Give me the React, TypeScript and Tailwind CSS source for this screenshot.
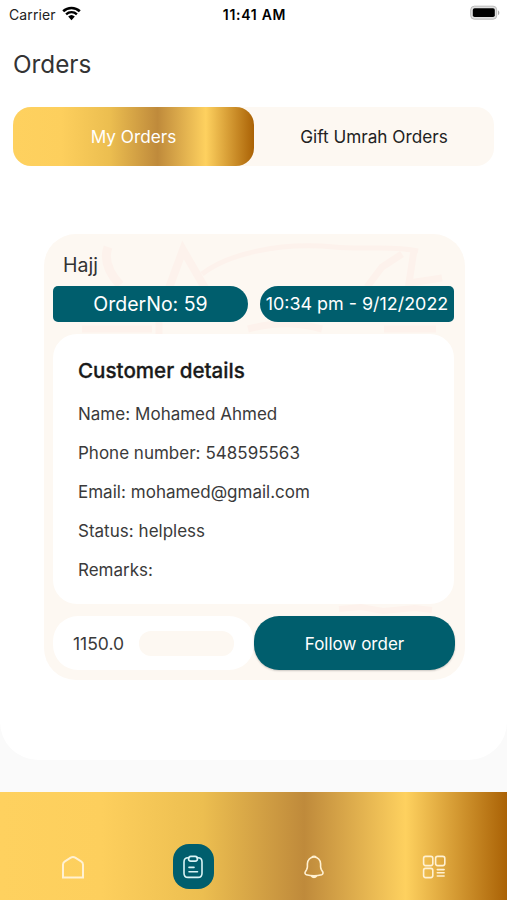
import type { ReactNode } from "react"
import clsx from "clsx"

const gold =
  "bg-[linear-gradient(90deg,#fed15f_0%,#fdcf5d_20%,#ecbe50_40%,#bf8a3b_60%,#fed15f_80%,#aa6206_100%)]"

const details = [
  { label: "Name", value: "Mohamed Ahmed" },
  { label: "Phone number", value: "548595563" },
  { label: "Email", value: "mohamed@gmail.com" },
  { label: "Status", value: "helpless" },
  { label: "Remarks", value: "" },
]

function StatusBar() {
  return (
    <div className="grid h-7 grid-cols-3 items-center pr-[7px] pl-[9px] text-black">
      <div className="flex items-center gap-[6px]">
        <span className="text-[14px] tracking-[0.1px] text-[#222]">Carrier</span>
        <svg className="-mt-0.5" width="19" height="15" viewBox="0 0 19 15" fill="none">
          <path d="M1.2 5.3a12 12 0 0 1 16.6 0" stroke="currentColor" strokeWidth="2.6" />
          <path d="M4.1 8.3a7.9 7.9 0 0 1 10.8 0" stroke="currentColor" strokeWidth="2.4" />
          <path d="M6.2 10.6a4.9 4.9 0 0 1 6.6 0L9.5 14.2z" fill="currentColor" />
        </svg>
      </div>
      <span className="text-center text-[14px] font-semibold tracking-[0.7px] whitespace-nowrap">
        11:41 AM
      </span>
      <svg className="-mt-0.5 justify-self-end" width="30" height="16" viewBox="0 0 30 16">
        <rect x="0.7" y="1.2" width="26" height="13" rx="3.6" fill="#e0e0e0" stroke="#bbb" />
        <rect x="2.8" y="3.3" width="22" height="8.8" rx="1.8" fill="#000" />
        <path d="M28 5.4c1.8.6 1.8 4 0 4.6z" fill="#aaa" />
      </svg>
    </div>
  )
}

function CardPattern() {
  return (
    <svg
      className="absolute inset-0"
      width="421"
      height="446"
      viewBox="0 0 421 446"
      fill="none"
      stroke="#fdf2ec"
    >
      <path d="M64 13c-5 14 2 27 12 38" strokeWidth="9" />
      <path d="M125 54l14-38 22 38" strokeWidth="8" />
      <path d="M158 40c26-20 76-32 132-27 32 3 58-2 84 4" strokeWidth="5" />
      <path d="M358 20l-20 13-15 20" strokeWidth="7" />
      <path d="M370 16l-5 33 33-5" strokeWidth="7" />
      <path d="M38 95h70M115 86v14M204 95c30-8 52-6 74 0M340 95h52" strokeWidth="7" />
      <path d="M295 375l22-2 22 4 32-3 17 2" strokeWidth="6" />
    </svg>
  )
}

function OrderCard() {
  return (
    <article className="relative mt-[68px] ml-11 h-[446px] w-[421px] overflow-hidden rounded-[32px] bg-[#fdf8f2]">
      <CardPattern />
      <div className="relative flex flex-col pr-[10px] pl-[9px]">
        <h2 className="mt-[17px] pl-[10px] text-[19.5px] leading-7 text-[#333]">Hajj</h2>
        <div className="mt-[7px] flex justify-between pr-px text-white">
          <span className="flex h-9 w-[195px] items-center justify-center rounded-l-[5px] rounded-r-[18px] bg-[#005e6d] pt-px text-[19.5px]">
            OrderNo: 59
          </span>
          <span className="flex h-9 w-[194px] items-center justify-center rounded-l-[18px] rounded-r-[5px] bg-[#005e6d] pt-px text-[17.9px] whitespace-nowrap">
            10:34 pm - 9/12/2022
          </span>
        </div>
        <section className="mt-3 mr-px h-[270px] rounded-[24px] bg-white px-[25px] pt-[23px]">
          <h3 className="text-[20.6px] leading-7 font-medium text-[#1a1a1a] [-webkit-text-stroke:0.3px_#1a1a1a]">
            Customer details
          </h3>
          <dl className="mt-[10px] text-[17px] leading-[39.1px] text-[#3a3a3a]">
            {details.map((item) => (
              <div key={item.label} className="flex gap-[5px]">
                <dt>{item.label}:</dt>
                <dd>{item.value}</dd>
              </div>
            ))}
          </dl>
        </section>
        <div className="mt-3 flex">
          <div className="flex h-[54px] w-[201px] items-center rounded-[25px] bg-white pl-5">
            <span className="w-[66px] pt-[2px] text-[17.5px] text-[#3a3a3a]">1150.0</span>
            <span className="h-[25px] w-[95px] rounded-[12px] bg-[#fdf8f2]" />
          </div>
          <button className="h-[54px] w-[201px] rounded-[25px] bg-[#005e6d] pt-[3px] text-[17px] text-white shadow-[0_1px_2px_#0003]">
            Follow order
          </button>
        </div>
      </div>
    </article>
  )
}

function NavIcon({ children, active, label }: { children: ReactNode; active?: boolean; label: string }) {
  return (
    <button aria-label={label} className="flex w-[120.3px] justify-center">
      <span
        className={clsx(
          "flex h-[45px] w-[41px] items-center justify-center rounded-[16px]",
          active && "bg-[#005e6d]"
        )}
      >
        <svg
          width="24"
          height="24"
          viewBox="0 0 24 24"
          fill="none"
          stroke={active ? "#d9f3f5" : "#fff1d2"}
          strokeWidth="1.6"
          strokeLinecap="round"
          strokeLinejoin="round"
        >
          {children}
        </svg>
      </span>
    </button>
  )
}

function BottomNav() {
  return (
    <nav className={`flex h-[108px] justify-center pt-[52px] ${gold}`}>
      <NavIcon label="Home">
        <path
          d="M2 22.4V9.6c0-1.5.6-2.5 1.9-3.3L9.8 2.6c1.5-.9 2.9-.9 4.4 0l5.9 3.7c1.3.8 1.9 1.8 1.9 3.3v12.8z"
          strokeWidth="2"
          strokeLinejoin="miter"
        />
      </NavIcon>
      <NavIcon label="Orders" active>
        <path d="M8.2 2.8H7C4.5 2.8 3 4.4 3 7v11.2c0 2.6 1.5 4.2 4 4.2h10c2.5 0 4-1.6 4-4.2V7c0-2.6-1.5-4.2-4-4.2h-1.2" />
        <path d="M9.8 1.4h4.4c3 0 3 4.7 0 4.7H9.8c-3 0-3-4.7 0-4.7zM8 12.4h5M8 16.7h8.5" />
      </NavIcon>
      <NavIcon label="Notifications">
        <path
          d="M12 2c-3.7 0-6.6 3-6.6 6.7v3.1c0 .9-.4 2-.8 2.8l-1.3 2.2c-.7 1.2-.2 2.6 1 2.9 5 1.4 10.4 1.4 15.4 0 1.2-.4 1.7-1.8 1-2.9l-1.3-2.2c-.4-.8-.8-1.9-.8-2.8V8.7C18.6 5 15.7 2 12 2z"
          strokeWidth="1.6"
        />
        <path d="M10.2 1.8c.4-1.1 3.2-1.1 3.6 0M9.2 20.9c.8 2.2 4.8 2.2 5.6 0z" fill="#fff1d2" strokeWidth="1.2" />
      </NavIcon>
      <NavIcon label="More">
        <rect x="1.6" y="1.4" width="9.2" height="9.2" rx="2" />
        <rect x="13.6" y="1.4" width="9.2" height="9.2" rx="2" />
        <rect x="1.6" y="13.4" width="9.2" height="9.2" rx="2" />
        <path d="M15.3 14.6h6.8M15.3 17.8h6.8M15.3 21h6.8" />
      </NavIcon>
    </nav>
  )
}

export default function App() {
  return (
    <div className="flex h-[900px] w-[507px] flex-col overflow-hidden bg-[#fafafa] font-['Inter',sans-serif]">
      <main className="h-[760px] rounded-b-[38px] bg-white">
        <StatusBar />
        <h1 className="mt-5 pl-[13px] text-[24.3px] leading-8 text-[#333]">Orders</h1>
        <div className="mx-[13px] mt-[27px] flex h-[59px] rounded-[18px] bg-[#fdf8f2] text-[17.2px]">
          <button className={`w-[241px] rounded-[18px] text-white ${gold}`}>My Orders</button>
          <button className="flex-1 text-[#222]">Gift Umrah Orders</button>
        </div>
        <OrderCard />
      </main>
      <div className="h-8" />
      <BottomNav />
    </div>
  )
}
